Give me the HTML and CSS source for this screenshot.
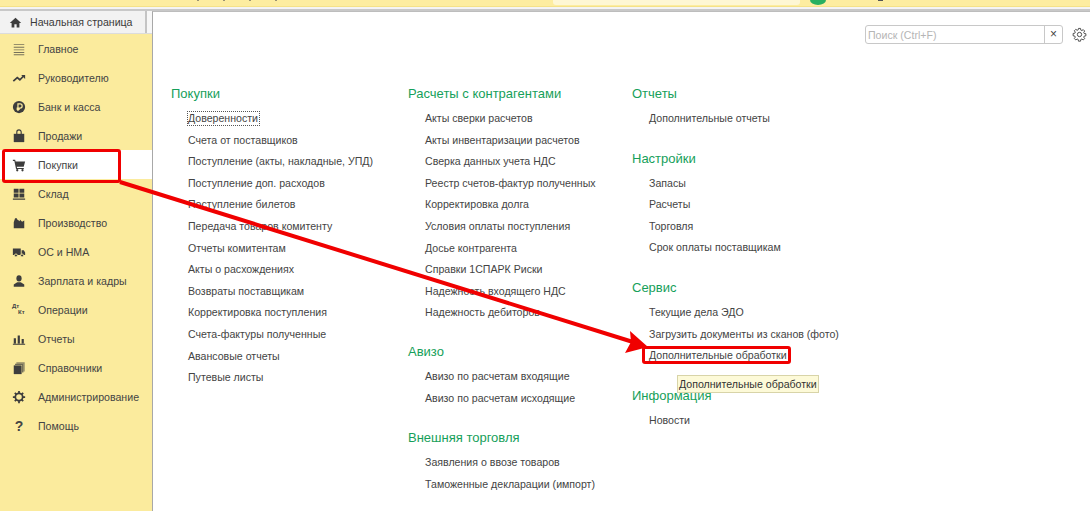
FILE: index.html
```html
<!DOCTYPE html>
<html lang="ru">
<head>
<meta charset="utf-8">
<title>Начальная страница</title>
<link rel="stylesheet" href="styles.css">
</head>
<body>
<div class="app">
  <header class="topbar">
    <div class="specks"><i></i><i></i><i></i><i></i></div>
    <div class="topfield"></div>
    <div class="topgreen"></div>
    <div class="topspeck"></div>
  </header>
  <div class="tabstrip"><i></i><i></i><i></i></div>
  <div class="work">
    <aside class="side">
      <div class="homerow">
        <div class="home">
          <svg class="ico" viewBox="0 0 16 16"><path d="M8 2 1 8.500h2.200V14h3.400v-4h2.800v4h3.400V8.500H15z"/></svg>
          <span>Начальная страница</span>
        </div>
        <div class="homegap"></div>
      </div>
      <nav class="menu">
        <div class="mi"><svg class="ico" viewBox="0 0 16 16"><path d="M2 2.500h12v1H2zM2 5.500h12v1H2zM2 8.500h12v1H2zM2 11.500h12v1H2zM2 14h12v1H2z" opacity=".7"/></svg>Главное</div>
        <div class="mi"><svg class="ico" viewBox="0 0 16 16"><path d="M1.500 11.500 6 7.500l3 2.500 4-4" fill="none" stroke="#3d3d3d" stroke-width="2"/><path d="M10.500 4.500H15V9z"/></svg>Руководителю</div>
        <div class="mi"><svg class="ico" viewBox="0 0 16 16"><circle cx="8" cy="8" r="7"/><path d="M6.800 12.500V4.500h2.400a2.300 2.300 0 0 1 0 4.800H5.300M5.300 10.800h3.500" fill="none" stroke="#fbeb9d" stroke-width="1.400"/></svg>Банк и касса</div>
        <div class="mi"><svg class="ico" viewBox="0 0 16 16"><path d="M2 5.500h12V15H2z"/><path d="M5.500 7V3.500a2.500 2.500 0 0 1 5 0V7" fill="none" stroke="#3d3d3d" stroke-width="1.300"/></svg>Продажи</div>
        <div class="mi active"><svg class="ico" viewBox="0 0 16 16"><path d="M1 2h2.600l.5 2H15l-1.600 6H5.500l.3 1.300h7.700v1.200H4.600L2.700 3.300H1z"/><circle cx="6" cy="14" r="1.300"/><circle cx="12" cy="14" r="1.300"/></svg>Покупки</div>
        <div class="mi"><svg class="ico" viewBox="0 0 16 16"><path d="M2 2h5.500v4.500H2zM8.500 2H14v4.500H8.500zM2 7.500h5.500V12H2zM8.500 7.500H14V12H8.500zM1 13h14v1.500H1z"/></svg>Склад</div>
        <div class="mi"><svg class="ico" viewBox="0 0 16 16"><path d="M2 14V7l1.500-4.500h2L6 4l3 2V4l2.500 2.500L14 5v9z"/></svg>Производство</div>
        <div class="mi"><svg class="ico" viewBox="0 0 16 16"><path d="M1 4h9v7.500H1zM11 6h2.500L15 8.500v3h-4z"/><circle cx="4.500" cy="12" r="1.700" stroke="#fbeb9d"/><circle cx="11.500" cy="12" r="1.700" stroke="#fbeb9d"/></svg>ОС и НМА</div>
        <div class="mi"><svg class="ico" viewBox="0 0 16 16"><ellipse cx="8" cy="5" rx="3" ry="3.500"/><path d="M2 14.500V12l4-2.500h4l4 2.500v2.500z"/></svg>Зарплата и кадры</div>
        <div class="mi"><span class="ico dtkt"><b>Дт</b><b>Кт</b></span>Операции</div>
        <div class="mi"><svg class="ico" viewBox="0 0 16 16"><path d="M2 7h2.500v6H2zM6.500 4H9v9H6.500zM11 8h2.500v5H11zM1 13.500h14v1H1z"/></svg>Отчеты</div>
        <div class="mi"><svg class="ico" viewBox="0 0 16 16"><path d="M5 1.500h9.500V12H13V3H5z" opacity=".55"/><path d="M3.500 3H13v10h-1.500V4.500h-8z" opacity=".75"/><path d="M2 5h9v10H2z"/></svg>Справочники</div>
        <div class="mi"><svg class="ico" viewBox="0 0 16 16"><circle cx="8" cy="8" r="4.200" fill="none" stroke="#3d3d3d" stroke-width="2"/><path d="M7 1h2v3H7zM7 12h2v3H7zM1 7h3v2H1zM12 7h3v2h-3zM2.500 3.900l1.400-1.400 2 2-1.400 1.400zM10.100 11.500l1.400-1.400 2 2-1.400 1.400zM2.500 12.100l2-2 1.400 1.400-2 2zM10.100 4.500l2-2 1.400 1.400-2 2z"/></svg>Администрирование</div>
        <div class="mi"><span class="ico help">?</span>Помощь</div>
      </nav>
    </aside>
    <main class="panel">
      <div class="searchrow">
        <div class="search"><span class="ph">Поиск (Ctrl+F)</span><span class="clear">×</span></div>
        <svg class="gear" viewBox="0 0 16 16"><path d="M6.900 1.500h2.200l.3 1.800 1.100.5 1.500-1 1.500 1.500-1 1.500.5 1.100 1.800.3v2.200l-1.800.3-.5 1.100 1 1.500-1.500 1.500-1.500-1-1.100.5-.3 1.800H6.900l-.3-1.800-1.100-.5-1.500 1-1.500-1.500 1-1.500-.5-1.100-1.800-.3V6.900l1.800-.3.5-1.100-1-1.500 1.500-1.500 1.500 1 1.100-.5z" fill="none" stroke="#444"/><circle cx="8" cy="8" r="2.300" fill="none" stroke="#444"/></svg>
      </div>
      <div class="cols">
        <section class="col c1">
          <h2>Покупки</h2>
          <ul>
            <li><a class="focus">Доверенности</a></li>
            <li>Счета от поставщиков</li>
            <li>Поступление (акты, накладные, УПД)</li>
            <li>Поступление доп. расходов</li>
            <li>Поступление билетов</li>
            <li>Передача товаров комитенту</li>
            <li>Отчеты комитентам</li>
            <li>Акты о расхождениях</li>
            <li>Возвраты поставщикам</li>
            <li>Корректировка поступления</li>
            <li>Счета-фактуры полученные</li>
            <li>Авансовые отчеты</li>
            <li>Путевые листы</li>
          </ul>
        </section>
        <section class="col c2">
          <h2>Расчеты с контрагентами</h2>
          <ul>
            <li>Акты сверки расчетов</li>
            <li>Акты инвентаризации расчетов</li>
            <li>Сверка данных учета НДС</li>
            <li>Реестр счетов-фактур полученных</li>
            <li>Корректировка долга</li>
            <li>Условия оплаты поступления</li>
            <li>Досье контрагента</li>
            <li>Справки 1СПАРК Риски</li>
            <li>Надежность входящего НДС</li>
            <li>Надежность дебиторов</li>
          </ul>
          <h2>Авизо</h2>
          <ul>
            <li>Авизо по расчетам входящие</li>
            <li>Авизо по расчетам исходящие</li>
          </ul>
          <h2>Внешняя торговля</h2>
          <ul>
            <li>Заявления о ввозе товаров</li>
            <li>Таможенные декларации (импорт)</li>
          </ul>
        </section>
        <section class="col c3">
          <h2>Отчеты</h2>
          <ul>
            <li>Дополнительные отчеты</li>
          </ul>
          <h2>Настройки</h2>
          <ul>
            <li>Запасы</li>
            <li>Расчеты</li>
            <li>Торговля</li>
            <li>Срок оплаты поставщикам</li>
          </ul>
          <h2>Сервис</h2>
          <ul>
            <li>Текущие дела ЭДО</li>
            <li>Загрузить документы из сканов (фото)</li>
            <li>Дополнительные обработки</li>
          </ul>
          <h2>Информация</h2>
          <ul>
            <li>Новости</li>
          </ul>
        </section>
      </div>
    </main>
  </div>
  <div class="tooltip">Дополнительные обработки</div>
  <div class="mark mark-a"></div>
  <div class="mark mark-b"></div>
  <svg class="arrow" viewBox="0 0 1090 511"><path d="M120 182 L633 342" stroke="#f00000" stroke-width="4" fill="none"/><path d="M630 331 L648 347 L625 353 L631 342z" fill="#f00000"/></svg>
</div>
</body>
</html>
```
FILE: styles.css
```css
* { box-sizing: border-box; }
html, body { margin: 0; padding: 0; }
body { width: 1090px; height: 511px; overflow: hidden; background: #fff; font-family: "Liberation Sans", Arial, sans-serif; font-size: 10.6px; color: #444; }
.app { position: relative; width: 1090px; height: 511px; display: flex; flex-direction: column; background: #fbeb9d; }
.topbar { height: 7px; flex: none; display: flex; align-items: flex-start; background: #fdeda0; border-bottom: 1px solid #f5e288; }
.specks { display: flex; gap: 24px; margin-left: 197px; width: 356px; }
.specks i { width: 2px; height: 1px; background: #9a9272; }
.topfield { width: 247px; height: 5px; background: #fef7d4; border-radius: 0 0 3px 3px; }
.topgreen { width: 16px; height: 5px; margin-left: 10px; background: #27b060; border-radius: 0 0 8px 8px / 0 0 5px 5px; }
.topspeck { width: 5px; height: 1px; margin-left: 52px; background: #555; }
.tabstrip { height: 4px; flex: none; display: flex; background: #f4f4f4; border-bottom: 2px solid #c8c8c8; padding-left: 360px; }
.tabstrip i { width: 1px; height: 3px; background: #aaa; margin-right: 209px; }
.tabstrip i:nth-child(2) { margin-right: 323px; }
.work { flex: 1; display: flex; min-height: 0; }
.side { width: 152px; flex: none; display: flex; flex-direction: column; }
.homerow { height: 22px; flex: none; display: flex; }
.home { flex: none; width: 145px; display: flex; align-items: center; gap: 8px; padding-left: 9px; background: #f2f2f2; color: #3a3a3a; }
.home .ico { width: 13px; height: 13px; }
.homegap { flex: 1; background: #f7f7f7; border-left: 2px solid #c4c4c4; }
.menu { display: flex; flex-direction: column; border-top: 1px solid #dcdcdc; }
.mi { height: 29px; display: flex; align-items: center; gap: 12px; padding-left: 12px; color: #444; }
.mi.active { background: #fff; }
.ico { width: 14px; height: 14px; flex: none; fill: #3d3d3d; }
.dtkt { display: flex; flex-direction: column; font-size: 6px; line-height: 6px; }
.dtkt b:last-child { margin-left: 6px; }
.help { font-size: 14px; font-weight: 700; text-align: center; line-height: 14px; }
.panel { flex: 1; min-width: 0; background: #fff; border-left: 1px solid #a8a8a8; border-top: 1px solid #bdbdbd; display: flex; flex-direction: column; }
.searchrow { height: 37px; flex: none; display: flex; align-items: flex-start; justify-content: flex-end; padding: 13px 3px 0 0; gap: 9px; }
.search { width: 198px; height: 19px; display: flex; align-items: center; justify-content: space-between; border: 1px solid #c8c8c8; border-radius: 3px; color: #b5b5b5; }
.ph { padding-left: 2px; }
.clear { width: 18px; height: 17px; border-left: 1px solid #c8c8c8; color: #444; text-align: center; line-height: 17px; font-size: 12px; }
.gear { width: 15px; height: 15px; margin-top: 2px; }
.cols { display: flex; padding-left: 18px; padding-top: 31px; }
.col { flex: none; }
.c1 { width: 237px; }
.c2 { width: 224px; }
h2 { margin: 0; font-size: 13px; line-height: 28px; height: 28px; font-weight: 400; color: #16a05a; }
ul { margin: 0 0 14.500px; padding: 0 0 0 17px; list-style: none; }
.c3 ul { margin-bottom: 15px; }
li { height: 21.600px; line-height: 21.600px; white-space: nowrap; color: #444; }
.focus { display: inline-block; line-height: 13px; margin-left: -1px; border: 1px dotted #555; padding: 0 1px 0 0; }
.tooltip { position: absolute; left: 677px; top: 375px; width: 142px; height: 18px; padding-left: 1px; line-height: 17px; background: #fdfad8; border: 1px solid #d8d4a8; color: #333; white-space: nowrap; }
.mark { position: absolute; border: 3px solid #f00000; border-radius: 3px; }
.mark-a { left: 2px; top: 149px; width: 119px; height: 34px; }
.mark-b { left: 642px; top: 346px; width: 149px; height: 18px; }
.arrow { position: absolute; left: 0; top: 0; width: 1090px; height: 511px; pointer-events: none; }
```
